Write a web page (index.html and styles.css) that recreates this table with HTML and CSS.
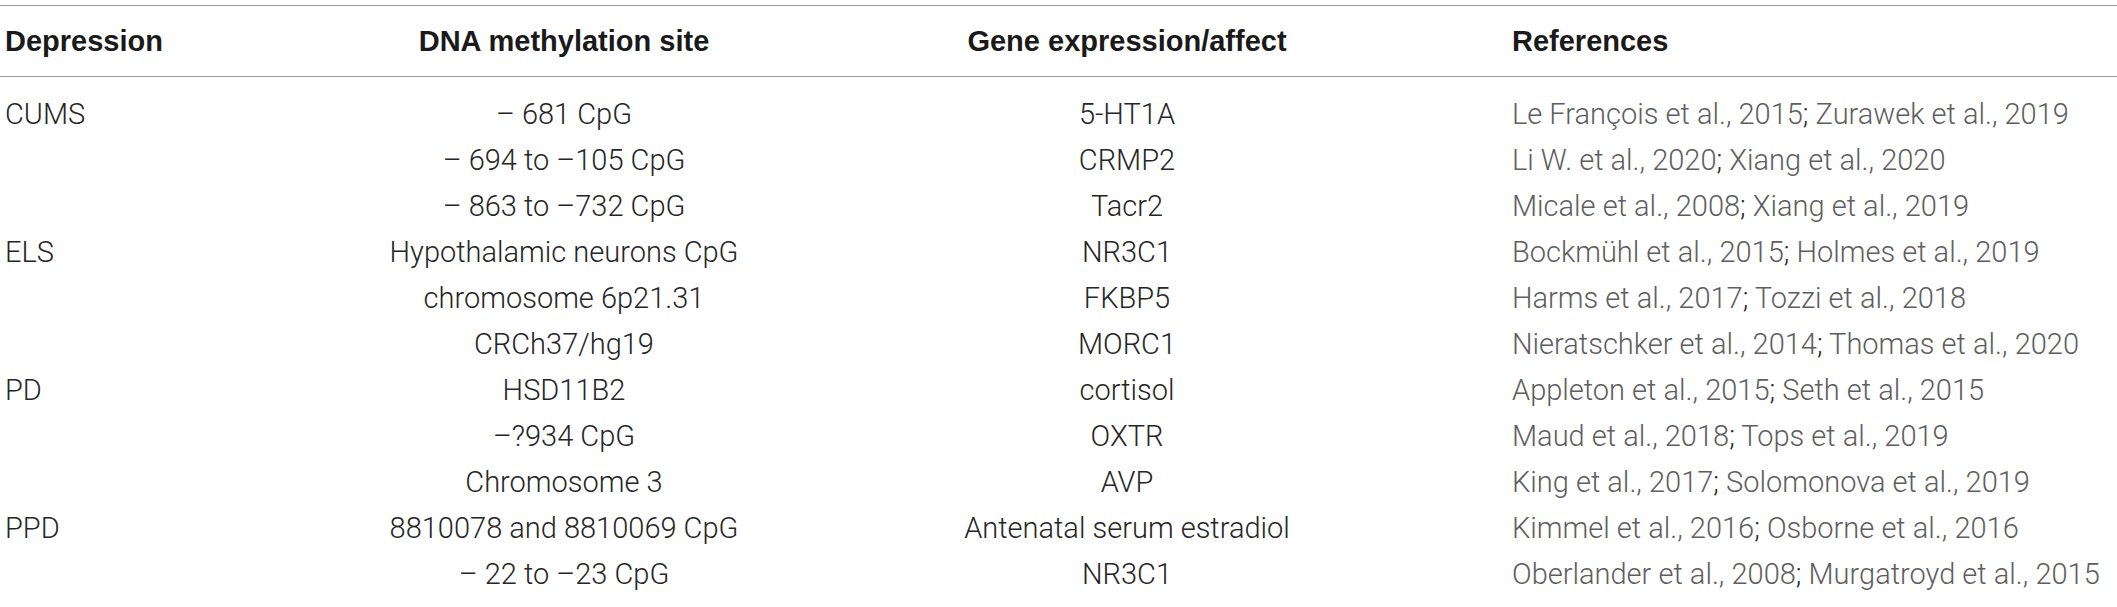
FILE: index.html
```html
<!DOCTYPE html>
<html>
<head>
<meta charset="utf-8">
<link rel="stylesheet" href="styles.css">
</head>
<body>
<table class="tbl">
  <colgroup>
    <col class="c1"><col class="c2"><col class="c3"><col class="c4">
  </colgroup>
  <thead>
    <tr>
      <th class="left">Depression</th>
      <th>DNA methylation site</th>
      <th>Gene expression/affect</th>
      <th class="ref">References</th>
    </tr>
  </thead>
  <tbody>
    <tr class="first">
      <td class="left">CUMS</td><td>– 681 CpG</td><td>5-HT1A</td>
      <td class="ref"><span class="lk">Le François et al., 2015</span>; <span class="lk">Zurawek et al., 2019</span></td>
    </tr>
    <tr>
      <td class="left"></td><td>– 694 to –105 CpG</td><td>CRMP2</td>
      <td class="ref"><span class="lk">Li W. et al., 2020</span>; <span class="lk">Xiang et al., 2020</span></td>
    </tr>
    <tr>
      <td class="left"></td><td>– 863 to –732 CpG</td><td>Tacr2</td>
      <td class="ref"><span class="lk">Micale et al., 2008</span>; <span class="lk">Xiang et al., 2019</span></td>
    </tr>
    <tr>
      <td class="left">ELS</td><td>Hypothalamic neurons CpG</td><td>NR3C1</td>
      <td class="ref"><span class="lk">Bockmühl et al., 2015</span>; <span class="lk">Holmes et al., 2019</span></td>
    </tr>
    <tr>
      <td class="left"></td><td>chromosome 6p21.31</td><td>FKBP5</td>
      <td class="ref"><span class="lk">Harms et al., 2017</span>; <span class="lk">Tozzi et al., 2018</span></td>
    </tr>
    <tr>
      <td class="left"></td><td>CRCh37/hg19</td><td>MORC1</td>
      <td class="ref"><span class="lk">Nieratschker et al., 2014</span>; <span class="lk">Thomas et al., 2020</span></td>
    </tr>
    <tr>
      <td class="left">PD</td><td>HSD11B2</td><td>cortisol</td>
      <td class="ref"><span class="lk">Appleton et al., 2015</span>; <span class="lk">Seth et al., 2015</span></td>
    </tr>
    <tr>
      <td class="left"></td><td>–?934 CpG</td><td>OXTR</td>
      <td class="ref"><span class="lk">Maud et al., 2018</span>; <span class="lk">Tops et al., 2019</span></td>
    </tr>
    <tr>
      <td class="left"></td><td>Chromosome 3</td><td>AVP</td>
      <td class="ref"><span class="lk">King et al., 2017</span>; <span class="lk">Solomonova et al., 2019</span></td>
    </tr>
    <tr>
      <td class="left">PPD</td><td>8810078 and 8810069 CpG</td><td>Antenatal serum estradiol</td>
      <td class="ref"><span class="lk">Kimmel et al., 2016</span>; <span class="lk">Osborne et al., 2016</span></td>
    </tr>
    <tr>
      <td class="left"></td><td>– 22 to –23 CpG</td><td>NR3C1</td>
      <td class="ref"><span class="lk">Oberlander et al., 2008</span>; <span class="lk">Murgatroyd et al., 2015</span></td>
    </tr>
  </tbody>
</table>
</body>
</html>
```

FILE: styles.css
```css
html, body {
  margin: 0;
  padding: 0;
  background: #ffffff;
}

body {
  padding-top: 5px;
}

.tbl {
  width: 2117px;
  border-collapse: collapse;
  table-layout: fixed;
  font-family: Roboto, "Liberation Sans", sans-serif;
  font-size: 29px;
  color: #262626;
}

.c1 { width: 300px; }
.c2 { width: 528px; }
.c3 { width: 598px; }
.c4 { width: 691px; }

.tbl th {
  font-family: "Liberation Sans", Arial, sans-serif;
  font-weight: 700;
  font-size: 29px;
  color: #1a1a1a;
  text-align: center;
  height: 70px;
  padding: 0;
  border-top: 1.5px solid #9a9a9a;
  border-bottom: 1.5px solid #9a9a9a;
  vertical-align: middle;
  white-space: nowrap;
}

.tbl td {
  font-weight: 300;
  text-align: center;
  height: 46px;
  line-height: 46px;
  padding: 0;
  vertical-align: middle;
  white-space: nowrap;
}

.tbl .left {
  text-align: left;
  padding-left: 5px;
}

.tbl .ref {
  text-align: left;
  padding-left: 86px;
}

.tbl tr.first td {
  padding-top: 14px;
}

.lk {
  color: #5e5e5e;
}
```
